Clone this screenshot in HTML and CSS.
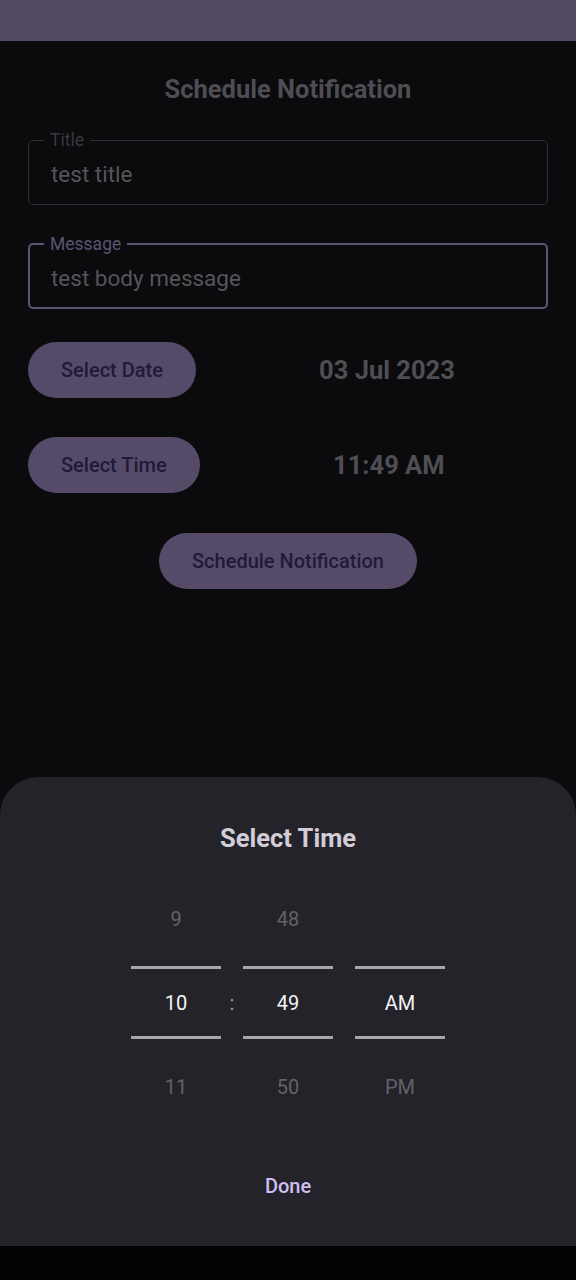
FILE: index.html
```html
<!DOCTYPE html>
<html lang="en">
<head>
<meta charset="utf-8">
<title>Schedule Notification</title>
<link rel="stylesheet" href="styles.css">
</head>
<body>
<div class="screen">
  <div class="status-bar"></div>
  <main class="content">
    <h1 class="heading">Schedule Notification</h1>
    <fieldset class="field">
      <legend class="field-label">Title</legend>
      <div class="field-value">test title</div>
    </fieldset>
    <fieldset class="field field-focused">
      <legend class="field-label">Message</legend>
      <div class="field-value">test body message</div>
    </fieldset>
    <div class="row row-date">
      <button class="pill">Select Date</button>
      <div class="row-value">03 Jul 2023</div>
    </div>
    <div class="row row-time">
      <button class="pill">Select Time</button>
      <div class="row-value">11:49 AM</div>
    </div>
    <div class="center-row">
      <button class="pill">Schedule Notification</button>
    </div>
  </main>

  <div class="overlay">
    <section class="sheet">
      <h2 class="sheet-title">Select Time</h2>
      <div class="picker">
        <div class="wheel">
          <div class="item item-prev">9</div>
          <div class="divider"></div>
          <div class="item item-sel">10</div>
          <div class="divider"></div>
          <div class="item item-next">11</div>
        </div>
        <div class="colon">:</div>
        <div class="wheel">
          <div class="item item-prev">48</div>
          <div class="divider"></div>
          <div class="item item-sel">49</div>
          <div class="divider"></div>
          <div class="item item-next">50</div>
        </div>
        <div class="spacer"></div>
        <div class="wheel">
          <div class="item item-prev"></div>
          <div class="divider"></div>
          <div class="item item-sel">AM</div>
          <div class="divider"></div>
          <div class="item item-next">PM</div>
        </div>
      </div>
      <div class="done">Done</div>
    </section>
    <div class="nav-bar"></div>
  </div>
</div>
</body>
</html>
```

FILE: styles.css
```css
* { box-sizing: border-box; }
html, body {
  margin: 0;
  padding: 0;
  background: #0b0a0c;
}
body {
  font-family: Roboto, "Noto Sans", "Liberation Sans", sans-serif;
}
.screen {
  position: relative;
  width: 576px;
  height: 1280px;
  overflow: hidden;
  background: #0b0a0c;
}
.status-bar {
  height: 41px;
  background: #524964;
}
.content {
  padding: 0 28px;
  display: flex;
  flex-direction: column;
}
.heading {
  margin: 33px 0 0;
  height: 30px;
  line-height: 30px;
  font-size: 25.5px;
  font-weight: 700;
  text-align: center;
  color: #4e4d53;
}
.field {
  margin: 27px 0 0;
  padding: 12px 20px 16px 22px;
  border: 1px solid #2f2e33;
  border-radius: 5px;
  min-width: 0;
  height: 74px;
}
.field + .field { margin-top: 30px; }
.field-label {
  padding: 0 6px;
  margin-left: -7px;
  font-size: 17.5px;
  line-height: 18px;
  height: 18px;
  color: #3a393e;
}
.field-value {
  font-size: 22.5px;
  line-height: 27px;
  color: #56555a;
}
.field-focused {
  border: 2px solid #5d5474;
  padding-left: 21px;
}
.field-focused .field-label { color: #5b5373; }

.row {
  display: flex;
  align-items: center;
  gap: 30px;
}
.row-date { margin-top: 33px; }
.row-time { margin-top: 39px; }
.row-value {
  flex: 1;
  text-align: center;
  font-size: 25.5px;
  font-weight: 700;
  color: #4f4e53;
}
.pill {
  height: 56px;
  padding: 0 33px;
  border: none;
  border-radius: 28px;
  background: #554b69;
  color: #21193a;
  font-family: Roboto, "Noto Sans", "Liberation Sans", sans-serif;
  font-size: 20px;
  font-weight: 500;
  white-space: nowrap;
}
.center-row {
  margin-top: 40px;
  display: flex;
  justify-content: center;
}

.overlay {
  position: absolute;
  left: 0;
  right: 0;
  bottom: 0;
  display: flex;
  flex-direction: column;
}
.sheet {
  height: 469px;
  background: #242329;
  border-radius: 38px 38px 0 0;
  padding-top: 46px;
  display: flex;
  flex-direction: column;
  align-items: center;
}
.sheet-title {
  margin: 0;
  height: 30px;
  line-height: 30px;
  font-size: 25.5px;
  font-weight: 700;
  color: #d2ced9;
}
.picker {
  margin-top: 19px;
  display: flex;
  align-items: flex-start;
}
.wheel {
  width: 90px;
  display: flex;
  flex-direction: column;
}
.item {
  display: flex;
  align-items: center;
  justify-content: center;
  font-size: 20px;
  color: #636267;
}
.item-prev { height: 94px; }
.item-sel { height: 67px; color: #f4f3f5; }
.item-next { height: 96px; }
.divider {
  height: 3px;
  background: #a9a6ad;
}
.colon, .spacer {
  width: 22px;
}
.colon {
  margin-top: 97px;
  height: 67px;
  display: flex;
  align-items: center;
  justify-content: center;
  font-size: 20px;
  color: #9c9ba0;
}
.done {
  margin-top: 39px;
  height: 24px;
  line-height: 24px;
  font-size: 20px;
  font-weight: 500;
  color: #cfbef2;
}
.nav-bar {
  height: 34px;
  background: #030203;
}
```
